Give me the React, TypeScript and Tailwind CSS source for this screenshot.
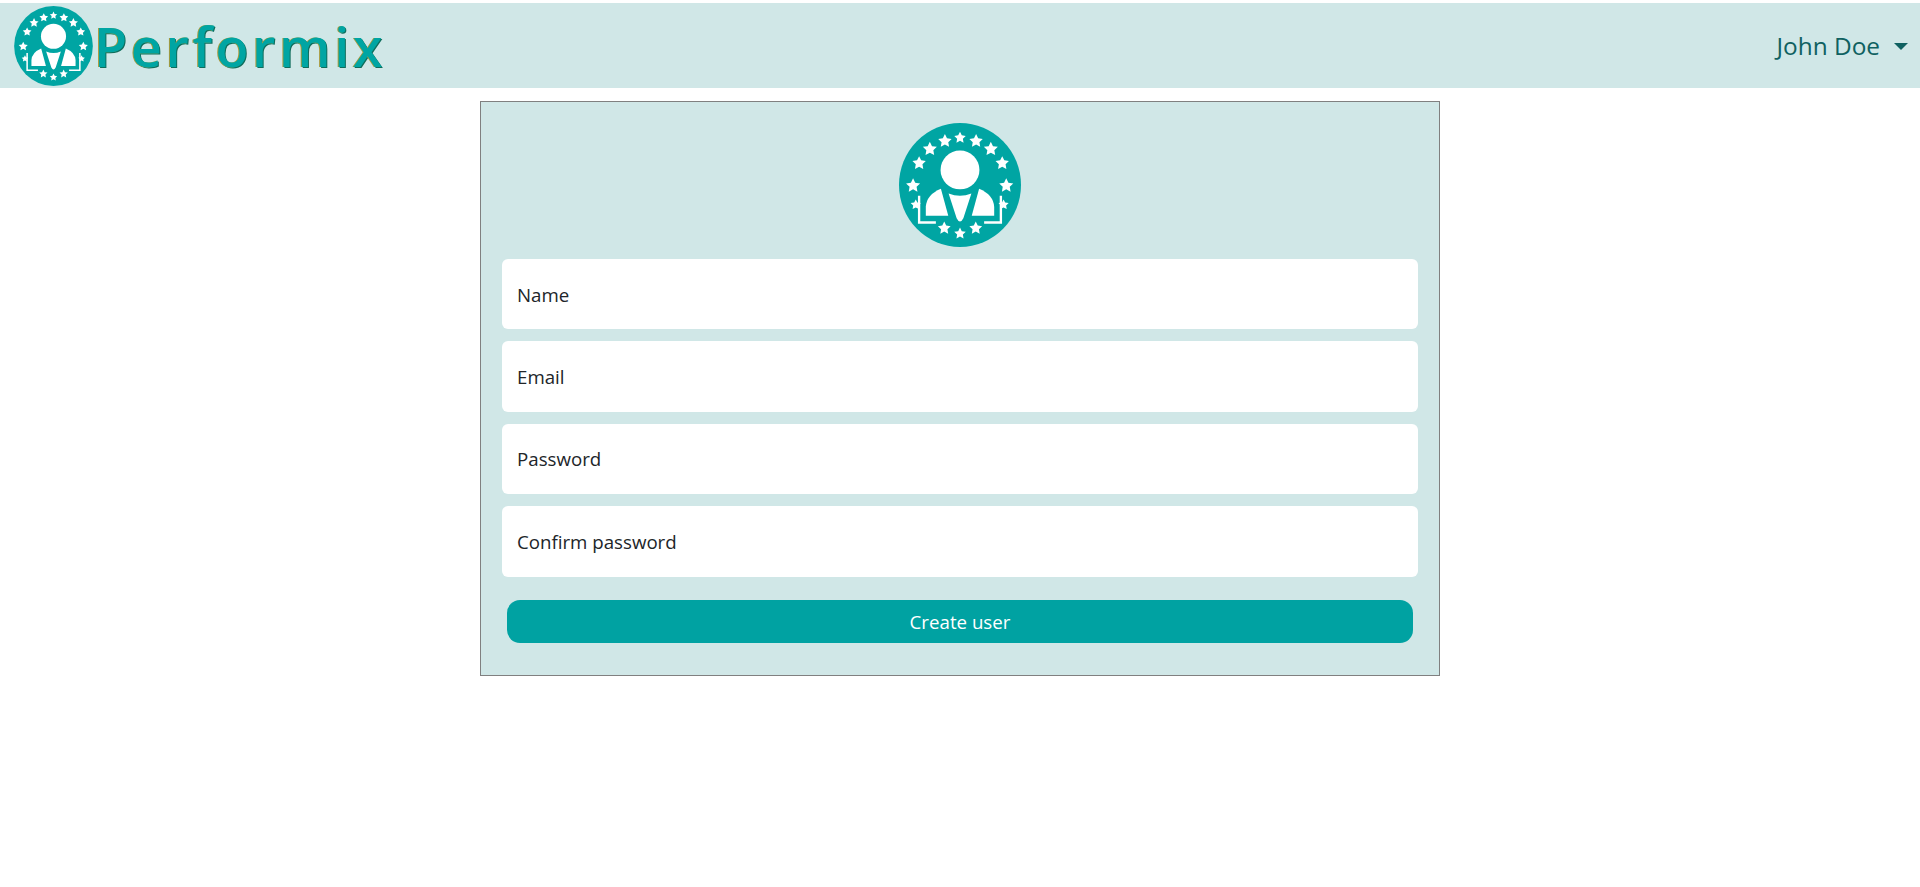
import React from "react";

const FONT = "font-['Open_Sans','Noto_Sans',sans-serif]";

const STARS: [number, number, number][] = [
  [240, 82, 18],
  [195, 92, 21],
  [288, 92, 21],
  [150, 116, 22],
  [332, 116, 22],
  [118, 158, 21],
  [366, 158, 21],
  [100, 225, 22],
  [378, 225, 22],
  [108, 282, 16],
  [370, 282, 16],
  [193, 352, 20],
  [287, 352, 20],
  [240, 368, 18],
];

function starPoints(cx: number, cy: number, r: number) {
  const pts: string[] = [];
  for (let i = 0; i < 10; i++) {
    const rad = i % 2 === 0 ? r : r * 0.5;
    const a = (Math.PI / 5) * i - Math.PI / 2;
    pts.push(`${cx + rad * Math.cos(a)},${cy + rad * Math.sin(a)}`);
  }
  return pts.join(" ");
}

function Logo({ className }: { className: string }) {
  return (
    <svg viewBox="58 38 364 370" className={className}>
      <ellipse cx="240" cy="223" rx="182" ry="185" fill="#00a5a3" />
      {STARS.map(([x, y, r]) => (
        <polygon key={`${x}-${y}`} points={starPoints(x, y, r)} fill="#fff" />
      ))}
      <circle cx="240" cy="178" r="58" fill="#fff" />
      <path d="M138 315 L138 288 Q140 252 183 234 L205 315 Z" fill="#fff" />
      <path d="M342 315 L342 288 Q340 252 297 234 L275 315 Z" fill="#fff" />
      <path d="M206 248 Q240 262 274 248 L250 322 Q240 342 230 322 Z" fill="#fff" />
      <path d="M118 255 L118 335 L168 335" stroke="#fff" strokeWidth="7" fill="none" />
      <path d="M362 255 L362 335 L312 335" stroke="#fff" strokeWidth="7" fill="none" />
    </svg>
  );
}

function Field({ label, type }: { label: string; type: string }) {
  return (
    <input
      type={type}
      placeholder={label}
      className="block h-[70.4px] w-full rounded-[6px] bg-white px-[15px] text-[18.7px] text-[#212529] outline-none placeholder:text-[#212529]"
    />
  );
}

export default function App() {
  return (
    <div className={`min-h-screen bg-white pt-[3px] ${FONT}`}>
      <nav className="flex h-[85px] items-center justify-between bg-[#d0e7e7] pl-[14px] pr-[12px]">
        <div className="flex items-center">
          <Logo className="h-[80px] w-[79px]" />
          <span className="ml-[1px] text-[54px] font-semibold leading-none tracking-[3.6px] text-[#00a5a3] [text-shadow:-1px_0_0_#a89a3c,1px_1px_0_#0f6d5c]">
            Performix
          </span>
        </div>
        <div className="flex items-center pt-[2px] text-[24.4px] text-[#0f6161]">
          <span>John Doe</span>
          <span className="ml-[14px] h-0 w-0 border-x-[7px] border-t-[7px] border-x-transparent border-t-[#0f6161]" />
        </div>
      </nav>

      <main className="mx-auto mt-[13px] w-[960px] border border-[#808080] bg-[#d0e7e7] px-[21px] pb-[32px] pt-[21px]">
        <div className="flex justify-center">
          <Logo className="h-[124px] w-[122px]" />
        </div>
        <form className="mt-[12px] flex flex-col gap-[12px]">
          <Field label="Name" type="text" />
          <Field label="Email" type="email" />
          <Field label="Password" type="password" />
          <Field label="Confirm password" type="password" />
        </form>
        <button
          type="button"
          className="mx-[5px] mt-[23.4px] block h-[43px] w-[906px] rounded-[13px] bg-[#00a2a2] pt-[1px] text-[18.7px] text-white"
        >
          Create user
        </button>
      </main>
    </div>
  );
}
